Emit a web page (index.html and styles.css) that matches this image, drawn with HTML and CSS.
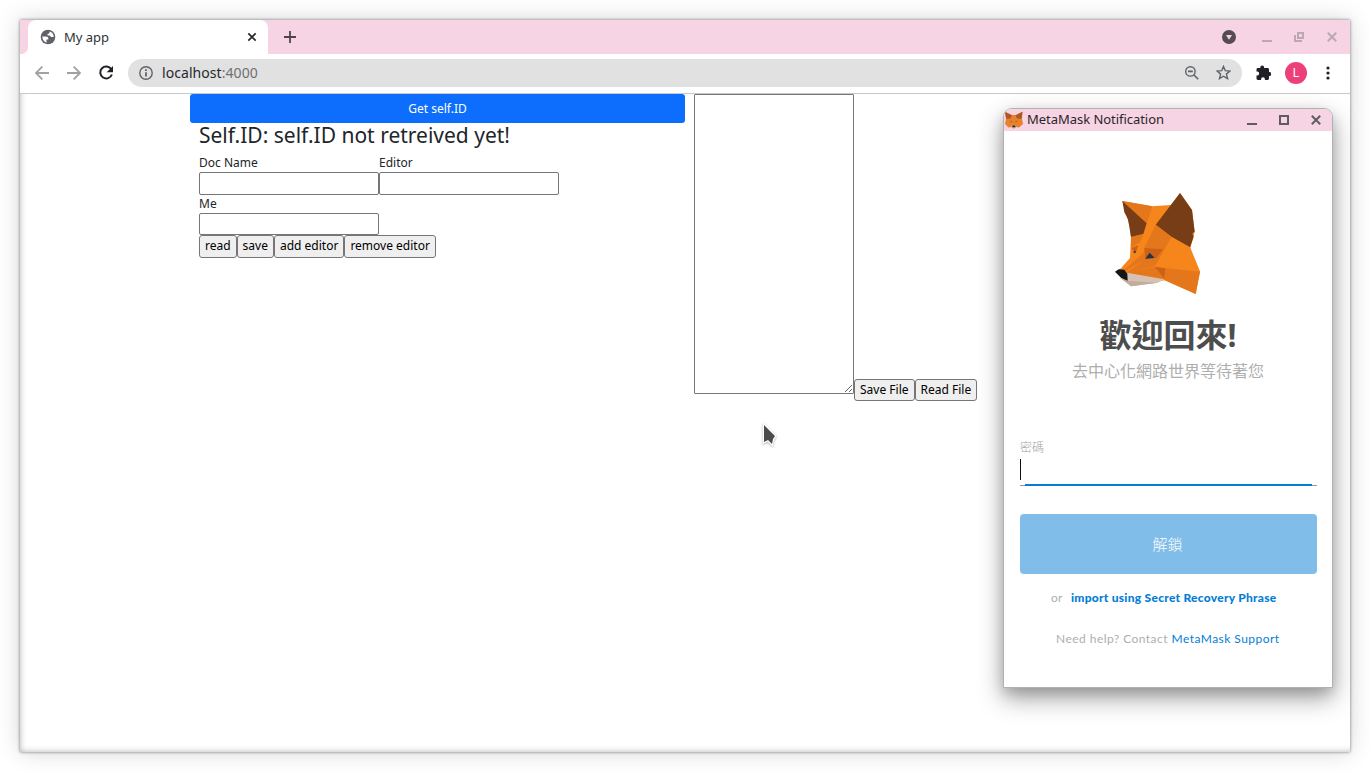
FILE: index.html
```html
<!DOCTYPE html>
<html lang="en">
<head>
<meta charset="utf-8">
<title>My app</title>
<link rel="stylesheet" href="styles.css">
</head>
<body>
<main class="browser">
  <header class="tabstrip">
    <div class="tab-edge"></div>
    <div class="tab">
      <svg class="globe" width="16" height="16" viewBox="0 0 16 16"><circle cx="8" cy="8" r="7.300" fill="#5f6368"/><path d="M2.300 7.600h3.500c1.500 0 2.500.7 2.500 1.900v1H6.500v3.200C4.200 13 2.300 10.800 2.300 7.600zM9.600 2.400c.2 1.700-.6 2.400-2 2.400v1.600h1.800c1 0 1.300.6 1.300 1.500h3c.2-2.500-1.500-4.800-4.100-5.500z" fill="#fff"/></svg>
      <span class="tab-title">My app</span>
      <svg width="10" height="10" viewBox="0 0 10 10"><path d="M1.300 1.300l7.400 7.400M8.700 1.300 1.300 8.700" stroke="#25272a" stroke-width="1.700"/></svg>
    </div>
    <svg class="plus" width="12" height="12" viewBox="0 0 12 12"><path d="M6 0v12M0 6h12" stroke="#4d454a" stroke-width="1.800"/></svg>
    <div class="window-tools">
      <svg width="14" height="14" viewBox="0 0 14 14"><circle cx="7" cy="7" r="7" fill="#564b52"/><path d="M4 5h6L7 9.800z" fill="#f6d4e3"/></svg>
      <svg width="10" height="10" viewBox="0 0 10 10"><path d="M0 9h10" stroke="#bda7b2" stroke-width="2"/></svg>
      <svg width="10" height="10" viewBox="0 0 10 10"><path d="M4 1h5v5H4zM1 3v6h7" fill="none" stroke="#bda7b2" stroke-width="2"/></svg>
      <svg width="10" height="10" viewBox="0 0 10 10"><path d="M.8.8l8.400 8.400M9.200.8.8 9.200" stroke="#bda7b2" stroke-width="2"/></svg>
    </div>
  </header>
  <nav class="toolbar">
    <svg width="14" height="14" viewBox="0 0 14 14"><path d="M14 7H1.300M7.300.6.9 7l6.400 6.400" fill="none" stroke="#a0a1a3" stroke-width="1.800"/></svg>
    <svg class="forward" width="14" height="14" viewBox="0 0 14 14"><path d="M0 7h12.700M6.700.6 13.100 7l-6.400 6.400" fill="none" stroke="#a0a1a3" stroke-width="1.800"/></svg>
    <svg class="reload" width="16" height="16" viewBox="0 0 16 16"><path d="M13.300 4.200A6 6 0 1 0 13.900 9.500" fill="none" stroke="#202124" stroke-width="2"/><path d="M15 1v6.300H8.700z" fill="#202124"/></svg>
    <div class="address">
      <svg width="14" height="14" viewBox="0 0 14 14"><circle cx="7" cy="7" r="6.200" fill="none" stroke="#5f6368" stroke-width="1.400"/><path d="M7 6.200v4.400M7 3.300v1.600" stroke="#5f6368" stroke-width="1.800"/></svg>
      <span class="url">localhost<span class="port">:4000</span></span>
      <svg width="14" height="14" viewBox="0 0 14 14"><circle cx="5.400" cy="5.400" r="4.700" fill="none" stroke="#5f6368" stroke-width="1.400"/><path d="M3 5.400h4.800M8.700 8.700l4.500 4.500" stroke="#5f6368" stroke-width="1.600"/></svg>
      <svg class="star" width="15" height="15" viewBox="0 0 15 15"><path d="M7.500 1.400 9.300 5.700l4.600.4-3.500 3 1.100 4.500-4-2.400-4 2.400 1.100-4.500-3.500-3 4.600-.4z" fill="none" stroke="#5f6368" stroke-width="1.400"/></svg>
    </div>
    <svg class="puzzle" width="15" height="15" viewBox="0 0 15 15"><path d="M4.300 3V2.300a1.900 1.900 0 0 1 3.800 0V3h3.500c.8 0 1.400.6 1.400 1.300v2.800h.4a1.900 1.900 0 0 1 0 3.800H13v2.600c0 .8-.6 1.400-1.400 1.400H8.900v-.8a1.900 1.900 0 0 0-3.800 0v.8H1.900c-.8 0-1.400-.6-1.400-1.400v-3h.7a1.900 1.900 0 0 0 0-3.900H.5V4.300C.5 3.600 1.100 3 1.900 3z" fill="#202124"/></svg>
    <div class="avatar">L</div>
    <svg class="dots" width="4" height="14" viewBox="0 0 4 14"><g fill="#202124"><circle cx="2" cy="2" r="1.600"/><circle cx="2" cy="7" r="1.600"/><circle cx="2" cy="12" r="1.600"/></g></svg>
  </nav>
  <section class="page">
    <div class="form">
      <button class="primary">Get self.ID</button>
      <div class="form-body">
        <h3 class="title">Self.ID: self.ID not retreived yet!</h3>
        <div class="row">
          <label class="field">Doc Name<input class="input"></label>
          <label class="field">Editor<input class="input"></label>
        </div>
        <label class="field">Me<input class="input"></label>
        <div class="row">
          <button class="btn">read</button><button class="btn">save</button><button class="btn">add editor</button><button class="btn">remove editor</button>
        </div>
      </div>
    </div>
    <div class="file">
      <textarea class="editor"></textarea>
      <div class="row file-actions"><button class="btn">Save File</button><button class="btn">Read File</button></div>
    </div>
  </section>
</main>

<aside class="popup">
  <header class="popup-bar">
    <svg width="20" height="18" viewBox="0 0 20 18"><path d="M1 .8 8 4h3.500L18.500.8 18 8l1 5-4 3.500-3-.5-1 1.200H8.500L7.500 16l-3 .5L1 13l1-5z" fill="#e8802c"/><path d="M1 .8 8 4.500 6.500 7.500 2.200 7.800zM18.500.8l-7 3.700L13 7.500l4.500.3z" fill="#a8592a"/><path d="M5.800 9.500l2.200.8-.2 1.400zM13.700 9.500l-2.200.8.2 1.400z" fill="#a5561f"/><path d="M7 14.500h5.500l-1.500 2.700H8.500z" fill="#cdb4a2"/><path d="M8.500 14.500h2.600l.3 1.700H8.200z" fill="#262626"/></svg>
    <span class="popup-title">MetaMask Notification</span>
    <svg width="10" height="10" viewBox="0 0 10 10"><path d="M0 9h10" stroke="#5e5e62" stroke-width="2"/></svg>
    <svg width="10" height="10" viewBox="0 0 10 10"><path d="M1 1h8v8H1z" fill="none" stroke="#5e5e62" stroke-width="2"/></svg>
    <svg width="10" height="10" viewBox="0 0 10 10"><path d="M.8.8l8.400 8.400M9.200.8.8 9.200" stroke="#5e5e62" stroke-width="2"/></svg>
  </header>
  <div class="popup-body">
    <svg class="fox" width="130" height="125" viewBox="0 0 390 375">
      <path d="M82 63 172 79 228 75 255 39 291 90 299 155 286 205 315 275 302 342 208 301 108 319 62 277 78 265 105 234 108 171 103 135z" fill="#f6851b"/>
      <path d="M82 63 172 79 155 130z" fill="#e4761b"/>
      <path d="M82 63 155 130 145 162 108 171 103 140 99 118 88 97z" fill="#763d16"/>
      <path d="M255 39 291 90 299 155 292 160 296 170 285 202 230 171 182 134z" fill="#763d16"/>
      <path d="M182 134 230 171 205 207 148 204z" fill="#e4761b"/>
      <path d="M108 171 145 162 136 185 108 203z" fill="#e4761b"/>
      <path d="M109 205 130 196 122 220z" fill="#cd6116"/>
      <path d="M148 204 205 207 184 235 150 237z" fill="#cd6116"/>
      <path d="M230 171 180 259 95 278 150 237 184 235 205 207z" fill="#e4761b"/>
      <path d="M230 171 285 202 315 275 180 260z" fill="#f6851b"/>
      <path d="M148 216 150 238 93 272 88 269z" fill="#e4761b"/>
      <path d="M182 260 95 278 208 301z" fill="#e4761b"/>
      <path d="M180 260 212 265 208 298z" fill="#cd6116"/>
      <path d="M212 265 315 275 302 342 208 299z" fill="#e4761b"/>
      <path d="M95 278 208 298 189 308 108 319 94 303z" fill="#d7c1b3"/>
      <path d="M72 292 98 302 189 308 108 319z" fill="#c0ad9e"/>
      <path d="M60 275 71 268 88 269 97 281 98 302 78 293z" fill="#161616"/>
      <path d="M151 236 164 218 179 234z" fill="#233447"/>
      <path d="M114 217 121 211 122 220z" fill="#233447"/>
    </svg>
    <h1 class="welcome">歡迎回來!</h1>
    <p class="subtitle">去中心化網路世界等待著您</p>
    <div class="password">
      <span class="password-label">密碼</span>
      <div class="password-input"><i class="caret"></i></div>
      <div class="underline"><div class="underline-focus"></div></div>
    </div>
    <button class="unlock">解鎖</button>
    <p class="import">or <a class="import-link">import using Secret Recovery Phrase</a></p>
    <p class="help">Need help? Contact <a class="link">MetaMask Support</a></p>
  </div>
</aside>

<svg class="pointer" width="18" height="26" viewBox="0 0 18 26"><path d="M4 3v17l4-2 4 4 1-5 2-3z" fill="#4b4b4b" stroke="#fff" stroke-width="2.500" paint-order="stroke"/></svg>
</body>
</html>
```
FILE: styles.css
```css
* { box-sizing: border-box; }
body {
  margin: 0;
  width: 1370px;
  height: 772px;
  overflow: hidden;
  padding: 20px;
  background: #fff;
  font-family: "Noto Sans", "Noto Sans CJK TC", sans-serif;
  font-size: 12px;
  line-height: 18px;
  color: #212529;
}
svg { display: block; flex: none; }
button, input, textarea { font: inherit; }

.browser {
  height: 732px;
  display: flex;
  flex-direction: column;
  background: #fff;
  box-shadow: 0 0 3px rgba(0,0,0,.5), 0 0 22px rgba(0,0,0,.17);
}
.tabstrip {
  height: 34px;
  flex: none;
  display: flex;
  align-items: center;
  background: #f6d4e3;
}
.tab-edge { width: 8px; height: 34px; background: #f6d4e3; border-radius: 0 0 7px 0; box-shadow: 3px 3px 0 #fff; clip-path: inset(0); }
.tab {
  width: 240px;
  height: 34px;
  display: flex;
  align-items: center;
  padding: 0 11px 0 12px;
  background: #fff;
  border-radius: 8px 8px 0 0;
}
.tab-title { flex: 1; margin-left: 8px; font-size: 13px; color: #303236; }
.plus { margin-left: 16px; }
.window-tools { margin: 0 13px 0 auto; display: flex; align-items: center; gap: 22px; }
.window-tools svg:first-child { margin-right: 4px; }
.window-tools svg:last-child { margin-left: 1px; }

.toolbar {
  height: 40px;
  flex: none;
  display: flex;
  align-items: center;
  padding: 0 20px 2px 15px;
  border-bottom: 1px solid #c9c9c9;
}
.forward { margin-left: 18px; }
.reload { margin-left: 17px; }
.address {
  flex: 1;
  height: 28px;
  margin-left: 14px;
  padding: 0 11px;
  display: flex;
  align-items: center;
  border-radius: 14px;
  background: #e1e1e1;
}
.url { flex: 1; margin-left: 9px; font-size: 14px; letter-spacing: .06px; color: #27292c; }
.port { color: #6f7174; }
.star { margin-left: 17px; }
.puzzle { margin-left: 14px; }
.avatar {
  width: 22px; height: 22px; margin-left: 14px;
  border-radius: 50%; background: #ec407a; color: #fff;
  font: 12px/22px Roboto, sans-serif; text-align: center;
}
.dots { margin-left: 19px; }

.page { flex: 1; display: flex; align-items: flex-start; padding-left: 170px; box-shadow: inset 3px -3px 6px -3px rgba(0,0,0,.3); }
.form { width: 495px; }
.primary {
  display: block; width: 100%; height: 29px; padding: 0;
  border: 0; border-radius: 3px; background: #0d6efd; color: #fff;
}
.form-body { padding-left: 9px; }
.title { margin: 0 0 6px; font-size: 21px; line-height: 25px; font-weight: 400; }
.row { display: flex; }
.field { width: 180px; display: flex; flex-direction: column; }
.input { width: 180px; height: 22.500px; padding: 1px 2px; border: 1px solid #767676; border-radius: 2px; background: #fff; }
.btn { height: 22.500px; padding: 0 5px; line-height: 18px; border: 1px solid #767676; border-radius: 3px; background: #efefef; color: #000; }
.file { display: flex; align-items: flex-end; margin-left: 9px; }
.editor { display: block; width: 160px; height: 300px; border: 1px solid #767676; border-radius: 1px; resize: both; background: #fff; }
.file-actions { margin-bottom: -7px; }

.popup {
  position: absolute; left: 1003px; top: 108px;
  width: 330px; height: 580px;
  border: 1px solid #b3b0b2;
  border-radius: 9px 9px 0 0;
  background: #fff;
  box-shadow: 0 10px 24px rgba(0,0,0,.38), 0 5px 12px rgba(0,0,0,.12);
  overflow: hidden;
}
.popup-bar { height: 22px; display: flex; align-items: center; gap: 22px; padding-right: 11px; background: #f6d4e3; }
.popup-title { flex: 1; margin-left: -19px; padding-bottom: 2px; font-size: 13px; letter-spacing: -.04px; color: #29262a; }
.popup-body { padding: 49px 15px 0 16px; display: flex; flex-direction: column; }
.fox { margin-left: 75px; }
.welcome { margin: 6px 1px 0 0; font-size: 32px; line-height: 48px; text-align: center; color: #4d4d4d; }
.subtitle { margin: 0 1px 0 0; font-size: 16px; line-height: 24px; text-align: center; color: #aeaeae; }
.password { margin-top: 56px; }
.password-label { display: block; font-size: 12px; line-height: 18px; font-weight: 300; color: #a4a4a4; }
.password-input { height: 27px; padding-top: 2px; }
.caret { display: block; width: 1px; height: 21px; background: #111; }
.underline { height: 2px; padding: 0 5px; background: linear-gradient(transparent 50%, #949494 50%); }
.underline-focus { height: 2px; background: #037dd6; }
.unlock { height: 60px; margin-top: 28px; padding: 0 2px 0 0; border: 0; border-radius: 4px; background: #81bde9; color: #fff; font-size: 15px; font-weight: 300; }
.import, .help { margin: 0; font-family: Lato, sans-serif; font-size: 12px; line-height: 18px; color: #aeaeae; white-space: nowrap; }
.import { margin-top: 15px; padding-left: 31px; letter-spacing: .3px; }
.import-link { margin-left: 5px; font-weight: 900; letter-spacing: .27px; color: #037dd6; }
.help { margin-top: 23px; padding-left: 36px; letter-spacing: .46px; }
.link { color: #037dd6; }

.pointer { position: absolute; left: 760px; top: 422px; filter: drop-shadow(0 1px 1px rgba(0,0,0,.3)); }
```
